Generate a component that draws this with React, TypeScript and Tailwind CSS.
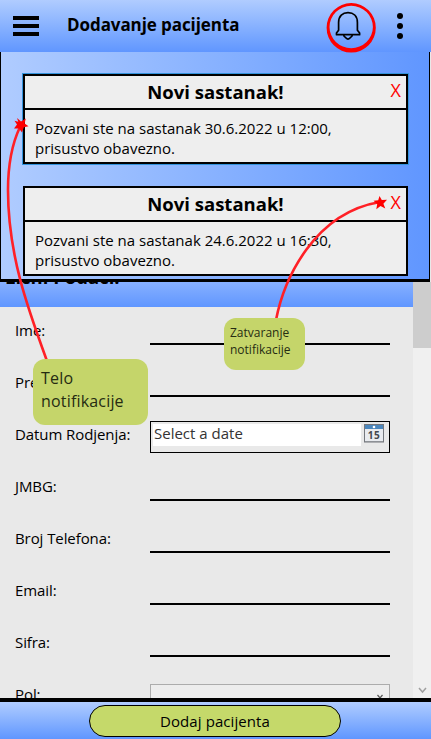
import React from "react";

const fields = ["Ime:", "Prezime:", "Datum Rodjenja:", "JMBG:", "Broj Telefona:", "Email:", "Sifra:", "Pol:"];

function Bell() {
  return (
    <svg className="absolute left-[325px] top-0 h-[54px] w-[54px]" viewBox="325 0 54 54" fill="none">
      <path
        fillRule="evenodd"
        fill="#ff0000"
        d="M351.2 3a24.6 24.8 0 1 1 0 49.6a24.6 24.8 0 1 1 0-49.6ZM351.2 5.8a21.7 21.2 0 1 0 0 42.4a21.7 21.2 0 1 0 0-42.4Z"
      />
      <path
        stroke="#000"
        strokeWidth="1.7"
        strokeLinejoin="round"
        d="M336.5 34.7V33L338.6 30.2V22.5C338.6 16 342.6 12.7 348 12.7S357.4 16 357.4 22.5V30.2L359.6 33V34.7H336.5ZM343.6 35C343.8 37 345.5 37 346 38Q348 40.2 350 38C350.5 37 352.2 37 352.4 35"
      />
    </svg>
  );
}

function Notification({ date, active }: { date: string; active?: boolean }) {
  return (
    <article
      className={`h-[90px] w-[385px] border-2 border-black bg-[#eeeeee] ${active ? "shadow-[0_0_0_1px_#3293dc]" : ""}`}
    >
      <header className="relative flex h-[34px] items-center justify-center border-b-2 border-black">
        <h2 className="text-[18.5px] font-bold leading-[32px]">Novi sastanak!</h2>
        <button className="absolute right-[5px] top-[-2px] text-[18px] leading-[32px] text-[#ff0000]">X</button>
      </header>
      <p className="whitespace-pre pl-[10px] pt-[8px] text-[15px] leading-[20px]">
        {`Pozvani ste na sastanak ${date},\nprisustvo obavezno.`}
      </p>
    </article>
  );
}

function CalendarIcon() {
  return (
    <svg className="h-[19px] w-[20px]" viewBox="0 0 20 19">
      <rect x=".5" y=".5" width="19" height="17.5" fill="#e9ebef" stroke="#74777d" />
      <rect x="1" y="1" width="18" height="4" fill="#4c87bd" />
      <circle cx="10" cy="3" r="1.3" fill="#fff" />
      <path d="M1 17.5H19" stroke="#8e9196" />
      <text x="10" y="15.3" textAnchor="middle" fontSize="10" fontWeight="700" letterSpacing=".5" fill="#44474d">15</text>
    </svg>
  );
}

function Control({ label }: { label: string }) {
  if (label === "Datum Rodjenja:")
    return (
      <div className="mt-[10px] flex h-[32px] w-[240px] border border-black pl-[2px] pt-[2px]">
        <div className="h-[22px] w-[208px] bg-white pl-px text-[15px] leading-[19px] text-[#333]">Select a date</div>
        <div className="ml-[3px]"><CalendarIcon /></div>
      </div>
    );
  if (label === "Pol:")
    return (
      <div className="mt-[13px] flex h-[30px] w-[240px] justify-end border border-[#acacac] bg-[#ededed] pr-[6px] pt-[9px]">
        <svg className="h-[6px] w-[6px]" viewBox="0 0 6 6" fill="none" stroke="#555" strokeWidth="1.2"><path d="M.5 1L3 4L5.5 1" /></svg>
      </div>
    );
  return <div className="h-[38px] w-[240px] border-b-2 border-black" />;
}

function Annotations() {
  return (
    <div className="pointer-events-none absolute inset-0">
      <svg className="absolute left-0 top-0 h-[739px] w-[431px]" viewBox="0 0 431 739" fill="none">
        <g stroke="#ff2026" strokeWidth="2.6">
          <path d="M20 127C11 146 8 166 8 190C8 255 28 309 47 361" />
          <path d="M276 320C284 279 314 213 380 202" />
        </g>
        <g fill="#ff0000">
          <path d="M17 118L21 121.5L25.8 118.5L24.6 123.4L28.5 126.3L23.8 127.3L22 132.5L19 128.5L14 128.6L17 124.6L14.5 120.8L18.3 121.8Z" />
          <path d="M379.5 196L381.8 200L387 199.8L383.4 203.7L385.3 208.5L380.5 206L376.3 209.2L377.2 204L373.5 200.8L378.2 200.3Z" />
        </g>
      </svg>
      <div className="absolute left-[33px] top-[359px] h-[66px] w-[115px] rounded-[12px] bg-[#c5d56a] pl-[8px] pt-[8px] text-[16px] leading-[23px] tracking-[0.18px] text-[#262c12]">
        Telo<br />notifikacije
      </div>
      <div className="absolute left-[224px] top-[318px] h-[52px] w-[81px] rounded-[12px] bg-[#c5d56a] pl-[6px] pt-[6px] text-[12px] leading-[17px] text-[#262c12]">
        Zatvaranje<br />notifikacije
      </div>
    </div>
  );
}

export default function App() {
  return (
    <main className="relative flex h-[739px] w-[431px] flex-col overflow-hidden bg-[#e9e9e9] font-['Open_Sans','Noto_Sans',sans-serif] text-black">
      <header className="flex h-[52px] shrink-0 items-center bg-linear-to-b from-[#b0ccff] to-[#6096ff] pl-[13px]">
        <div className="flex w-[26px] flex-col gap-1">
          <i className="h-1 bg-black" />
          <i className="h-1 bg-black" />
          <i className="h-1 bg-black" />
        </div>
        <h1 className="mb-[3px] ml-[28px] text-[17px] font-bold leading-[24px] tracking-[-0.08px]">Dodavanje pacijenta</h1>
        <div className="ml-auto mr-[28px] flex flex-col gap-[4px]">
          <i className="size-[6px] rounded-full bg-black" />
          <i className="size-[6px] rounded-full bg-black" />
          <i className="size-[6px] rounded-full bg-black" />
        </div>
        <Bell />
      </header>
      <section className="flex h-[230px] w-[430px] shrink-0 flex-col gap-[22px] border-x border-b-[3px] border-black bg-linear-to-r from-[#b0ccff] to-[#6096ff] pl-[22px] pt-[22px]">
        <Notification date="30.6.2022 u 12:00" active />
        <Notification date="24.6.2022 u 16:30" />
      </section>
      <section className="flex h-[416px] shrink-0 overflow-hidden">
        <div className="w-[413px]">
          <div className="h-[25px] overflow-hidden bg-linear-to-b from-[#87b0ff] to-[#6096ff]">
            <h2 className="-mt-[19px] pl-[5px] text-[18.5px] font-bold leading-[28px]">Lični Podaci:</h2>
          </div>
          {fields.map((label) => (
            <div key={label} className="flex h-[52px] pl-[15px]">
              <label className="w-[135px] shrink-0 whitespace-nowrap pt-[12px] text-[15px] leading-[22px] tracking-[-0.08px]">
                {label}
              </label>
              <Control label={label} />
            </div>
          ))}
        </div>
        <div className="flex w-[18px] flex-col items-center justify-between bg-[#f0f0f0]">
          <div className="h-[66px] w-full bg-[#cdcdcd]" />
          <svg className="mb-[4px] h-[8px] w-[9px]" viewBox="0 0 9 8" fill="none" stroke="#a0a0a0" strokeWidth="1.5"><path d="M1 2L4.5 6L8 2" /></svg>
        </div>
      </section>
      <footer className="flex h-[41px] shrink-0 border-t-4 border-black bg-linear-to-b from-[#b0ccff] to-[#6096ff] pl-[89px] pt-[3px]">
        <button className="h-[32px] w-[252px] rounded-full border border-black bg-[#c5d96a] text-[15px] leading-[29px] tracking-[0.08px]">Dodaj pacijenta</button>
      </footer>
      <Annotations />
    </main>
  );
}
